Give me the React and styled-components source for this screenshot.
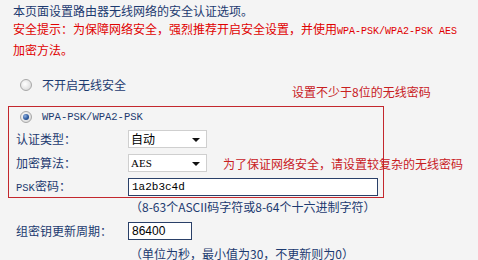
import styled, { createGlobalStyle } from "styled-components";

const GlobalStyle = createGlobalStyle`
  body {
    margin: 0;
    background: #f4f4f4;
    font-family: "Noto Sans CJK SC", sans-serif;
    font-size: 12px;
    color: #1c3a70;
  }
`

const Page = styled.div`
  position: relative;
  width: 478px;
  height: 260px;
  overflow: hidden;
  padding: 2px 0 0 8px;
  box-sizing: border-box;
  line-height: 18px;
`

const Intro = styled.div`
  padding-left: 5px;
  p {
    margin: 0;
  }
`

const Warn = styled.p`
  color: #e00000;
`

const Mono = styled.span`
  font-family: "Liberation Mono", monospace;
  font-size: ${props => props.size || 10}px;
`

const RadioRow = styled.label`
  display: flex;
  align-items: center;
  gap: 10px;
  height: 18px;
  margin-top: ${props => props.top || 0}px;
  padding-left: ${props => props.left || 0}px;
`

const Radio = styled.span`
  width: 12px;
  height: 12px;
  border-radius: 50%;
  box-sizing: border-box;
  border: 1px solid #a8a8a8;
  background: radial-gradient(circle at 40% 40%, #ffffff 0%, #e6e6e6 55%, #cfcfcf 100%);
  display: flex;
  align-items: center;
  justify-content: center;
  &::after {
    content: "";
    display: ${props => props.checked ? "block" : "none"};
    width: 6px;
    height: 6px;
    border-radius: 50%;
    background: radial-gradient(circle at 35% 35%, #8fb0e0 0%, #2d5a9e 55%, #1a3a70 100%);
  }
`

const SecureBox = styled.div`
  margin-top: 12px;
  width: 376px;
  box-sizing: border-box;
  border: 1px solid #c3272d;
  padding: 1px 0 1px 7px;
`

const FormGrid = styled.div`
  display: grid;
  grid-template-columns: 112px 1fr;
  grid-auto-rows: 18px;
  row-gap: 6px;
  align-items: center;
  margin-top: ${props => props.top || 0}px;
  padding-left: ${props => props.left || 0}px;
`

const Label = styled.span`
  white-space: nowrap;
`

const Select = styled.div`
  position: relative;
  width: 79px;
  height: 18px;
  box-sizing: border-box;
  background: #fff;
  border: 1px solid #cfcfcf;
  padding-left: 2px;
  display: flex;
  align-items: center;
  color: #000;
  font-family: ${props => props.serif ? "\"Liberation Serif\", serif" : "\"Noto Sans CJK SC\", sans-serif"};
  font-size: ${props => props.serif ? 11 : 12}px;
  &::after {
    content: "";
    position: absolute;
    right: 6px;
    top: 7px;
    border-left: 4px solid transparent;
    border-right: 4px solid transparent;
    border-top: 4px solid #111;
  }
`

const TextInput = styled.div`
  width: ${props => props.width}px;
  height: ${props => props.h || 17}px;
  box-sizing: border-box;
  background: #fff;
  border: 1px solid #2a4068;
  padding-left: 3px;
  display: flex;
  align-items: center;
  color: #000;
  font-family: ${props => props.mono ? "\"Liberation Mono\", monospace" : "\"Liberation Sans\", sans-serif"};
  font-size: ${props => props.mono ? 11 : 12}px;
`

const Hint = styled.div`
  padding-left: 122px;
  margin-top: ${props => props.top || 0}px;
`

const Note = styled.div`
  position: absolute;
  left: ${props => props.x}px;
  top: ${props => props.y}px;
  color: #c8201f;
  white-space: nowrap;
  font-size: 12px;
`

function App() {
  return (
    <>
      <GlobalStyle />
      <Page>
        <Intro>
          <p>本页面设置路由器无线网络的安全认证选项。</p>
          <Warn>
            安全提示：为保障网络安全，强烈推荐开启安全设置，并使用<Mono>WPA-PSK/WPA2-PSK AES</Mono>
            <br />加密方法。
          </Warn>
        </Intro>

        <RadioRow top={17} left={12}>
          <Radio />
          <span>不开启无线安全</span>
        </RadioRow>

        <SecureBox>
          <RadioRow left={4}>
            <Radio checked />
            <Mono size={10.5}>WPA-PSK/WPA2-PSK</Mono>
          </RadioRow>
          <FormGrid top={4}>
            <Label>认证类型：</Label>
            <Select>自动</Select>
            <Label>加密算法：</Label>
            <Select serif>AES</Select>
            <Label><Mono size={10.5}>PSK</Mono>密码：</Label>
            <TextInput width={250} h={18} mono>1a2b3c4d</TextInput>
          </FormGrid>
        </SecureBox>

        <Hint>（8-63个ASCII码字符或8-64个十六进制字符）</Hint>

        <FormGrid top={6} left={8}>
          <Label>组密钥更新周期：</Label>
          <TextInput width={64} h={18}>86400</TextInput>
        </FormGrid>

        <Hint top={5}>（单位为秒，最小值为30，不更新则为0）</Hint>

        <Note x={292} y={83}>设置不少于8位的无线密码</Note>
        <Note x={223} y={155}>为了保证网络安全，请设置较复杂的无线密码</Note>
      </Page>
    </>
  );
}

export default App;
